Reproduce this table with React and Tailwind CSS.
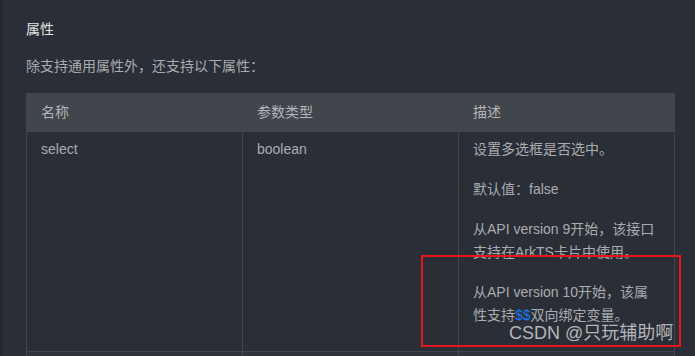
const font = { fontFamily: '"Liberation Sans", "Noto Sans CJK SC", sans-serif' };

const columns = ["名称", "参数类型", "描述"];

// 描述列里的段落，每段按行拆开
const notes = [
  ["设置多选框是否选中。"],
  ["默认值：false"],
  ["从API version 9开始，该接口", "支持在ArkTS卡片中使用。"],
];

const Line = ({ children }) => <span className="block whitespace-nowrap">{children}</span>;

export default function App() {
  return (
    <div
      className="relative h-[356px] w-[695px] overflow-hidden border-l-2 border-[#24282e] bg-[#2a2f37] text-[14px]"
      style={font}
    >
      <div className="pl-[24px] pt-[18px]">
        <h2 className="font-normal leading-[22px] text-[#e3e4e5]">属性</h2>
        <p className="mt-[15px] leading-[22px] text-[#a9abaf]">除支持通用属性外，还支持以下属性：</p>

        <table className="mt-[16px] w-[649px] table-fixed border-collapse">
          <thead>
            <tr className="h-[38px] bg-[#41454c]">
              {columns.map((c) => (
                <th
                  key={c}
                  className="border border-[#41454c] px-[14px] text-left font-normal text-[#b3b5b8]"
                >
                  {c}
                </th>
              ))}
            </tr>
          </thead>
          <tbody>
            <tr className="align-top text-[#a9abaf]">
              <td className="h-[220px] border border-[#41464e] px-[14px] pt-[6px] leading-[23px]">select</td>
              <td className="border border-[#41464e] px-[14px] pt-[6px] leading-[23px]">boolean</td>
              <td className="border border-[#41464e] px-[14px] pt-[6px] leading-[23px]">
                {notes.map((p, i) => (
                  <p key={i} className="mb-[17px]">
                    {p.map((l) => (
                      <Line key={l}>{l}</Line>
                    ))}
                  </p>
                ))}
                <p>
                  <Line>从API version 10开始，该属</Line>
                  <Line>
                    性支持<span className="text-[#1a7af0]">$$</span>双向绑定变量。
                  </Line>
                </p>
              </td>
            </tr>
            <tr className="h-[30px] bg-[#2f333a]">
              <td className="border border-[#41464e]" />
              <td className="border border-[#41464e]" />
              <td className="border border-[#41464e]" />
            </tr>
          </tbody>
        </table>
      </div>

      {/* 标注框与水印 */}
      <div className="absolute left-[419px] top-[255px] h-[92px] w-[260px] border-2 border-[#e8141a]" />
      <span className="absolute left-[507px] top-[321px] whitespace-nowrap text-[18px] leading-[24px] text-[#cfd0d2]/85">
        CSDN @只玩辅助啊
      </span>
    </div>
  );
}
